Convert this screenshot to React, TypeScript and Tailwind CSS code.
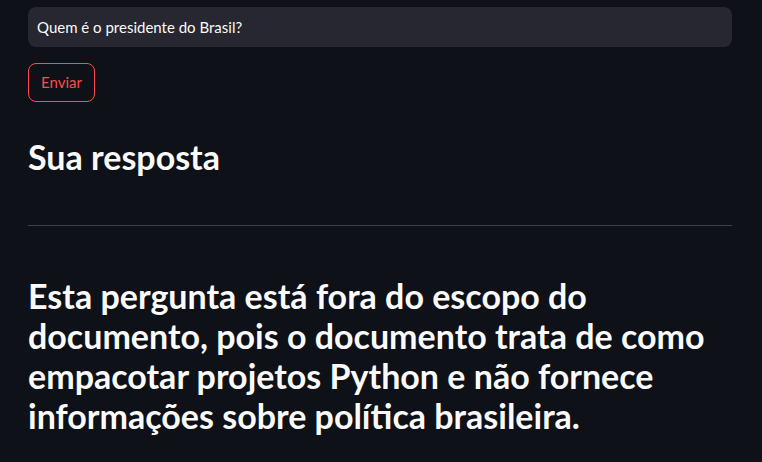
import React from 'react';

export default function App() {
	return (
		<div className="min-h-screen bg-[#0e1117] text-[#fafafa] font-['Lato','Noto_Sans',sans-serif]">
			<div className="pl-7 pr-[30px] pt-[7px]">
				{/* pergunta */}
				<div className="h-10 rounded-lg bg-[#262730] flex items-center px-[9px] text-[15px] text-[#fafafa]">
					Quem é o presidente do Brasil?
				</div>

				<button className="mt-4 h-[39px] px-3 rounded-lg border border-[#ff4b4b] text-[#ff4b4b] text-[15px]">
					Enviar
				</button>

				<h2 className="mt-[35px] text-[34px] font-bold leading-[1.2]">Sua resposta</h2>

				<hr className="mt-[47px] border-t border-[rgba(250,250,250,0.2)]" />

				<p className="mt-[50px] text-[34px] font-bold leading-[40px]">
					Esta pergunta está fora do escopo do documento, pois o documento trata de como empacotar projetos Python e não fornece informações sobre política brasileira.
				</p>
			</div>
		</div>
	);
}
